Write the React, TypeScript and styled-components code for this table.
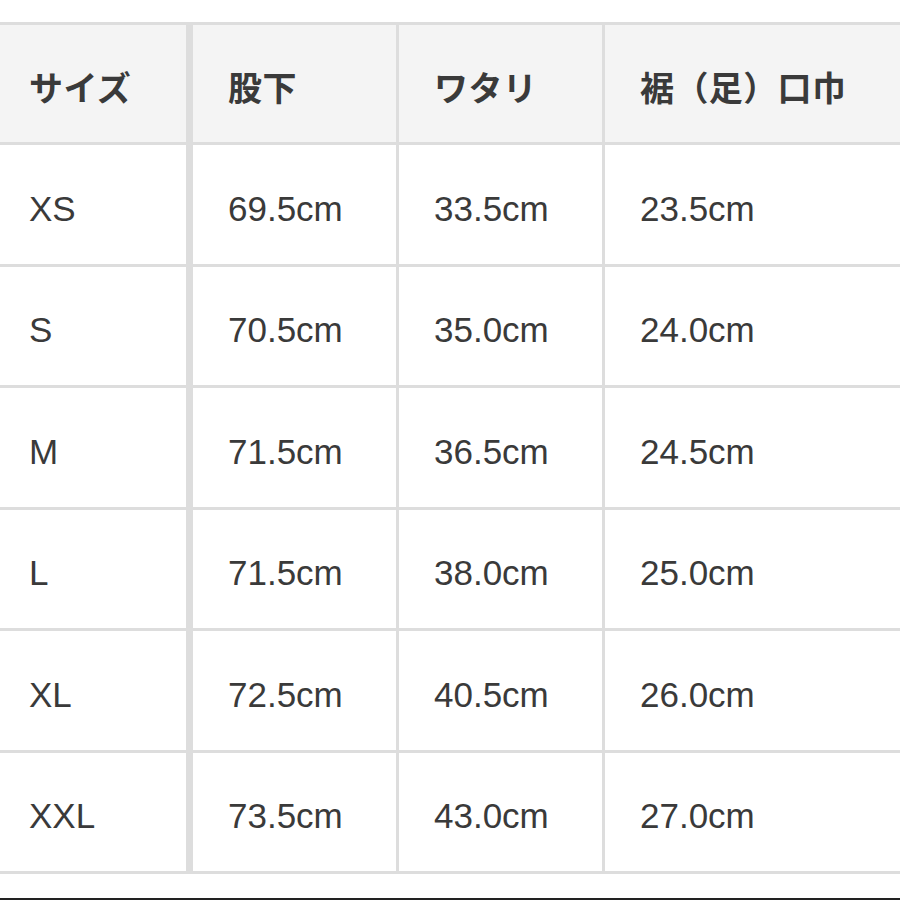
import React from "react";
import styled, { createGlobalStyle } from "styled-components";

const Global = createGlobalStyle`
  html, body { margin: 0; padding: 0; background: #ffffff; }
  body { width: 900px; height: 900px; overflow: hidden; }
`;

const Page = styled.div`
  width: 900px;
  height: 900px;
  display: flex;
  flex-direction: column;
  background: #fff;
`;

const Table = styled.div`
  margin-top: 22px;
  display: grid;
  grid-template-columns: 190px 203px 203px 1fr;
  grid-auto-rows: 118.5px;
  grid-template-rows: 117px;
  column-gap: 3px;
  row-gap: 3px;
  padding: 3px 0;
  background: #dddddd;
`;

const Cell = styled.div<{ $head?: boolean; $first?: boolean }>`
  display: flex;
  align-items: center;
  padding: ${(p) => (p.$head ? 6 : 9)}px 0 0 ${(p) => (p.$first ? 29 : 35)}px;
  background: ${(p) => (p.$head ? "#f4f4f4" : "#ffffff")};
  color: #3a3a3a;
  margin-right: ${(p) => (p.$first ? 4 : 0)}px;
  font-family: ${(p) =>
    p.$head
      ? `"Noto Sans CJK JP", "Noto Sans", sans-serif`
      : `"Liberation Sans", Arial, sans-serif`};
  font-size: ${(p) => (p.$head ? 34 : 35)}px;
  font-weight: ${(p) => (p.$head ? 700 : 400)};
  letter-spacing: ${(p) => (p.$head ? "0.4px" : "0")};
  white-space: nowrap;
`;

const Spacer = styled.div`
  flex: 1;
`;

const BottomRule = styled.div`
  height: 2px;
  background: #222;
`;

const headers = ["サイズ", "股下", "ワタリ", "裾（足）口巾"];
const rows = [
  ["XS", "69.5cm", "33.5cm", "23.5cm"],
  ["S", "70.5cm", "35.0cm", "24.0cm"],
  ["M", "71.5cm", "36.5cm", "24.5cm"],
  ["L", "71.5cm", "38.0cm", "25.0cm"],
  ["XL", "72.5cm", "40.5cm", "26.0cm"],
  ["XXL", "73.5cm", "43.0cm", "27.0cm"],
];

export default function App() {
  return (
    <Page>
      <Global />
      <Table>
        {headers.map((h, i) => (
          <Cell key={h} $head $first={i === 0}>
            {h}
          </Cell>
        ))}
        {rows.map((r) =>
          r.map((v, i) => (
            <Cell key={r[0] + i} $first={i === 0}>
              {v}
            </Cell>
          ))
        )}
      </Table>
      <Spacer />
      <BottomRule />
    </Page>
  );
}
